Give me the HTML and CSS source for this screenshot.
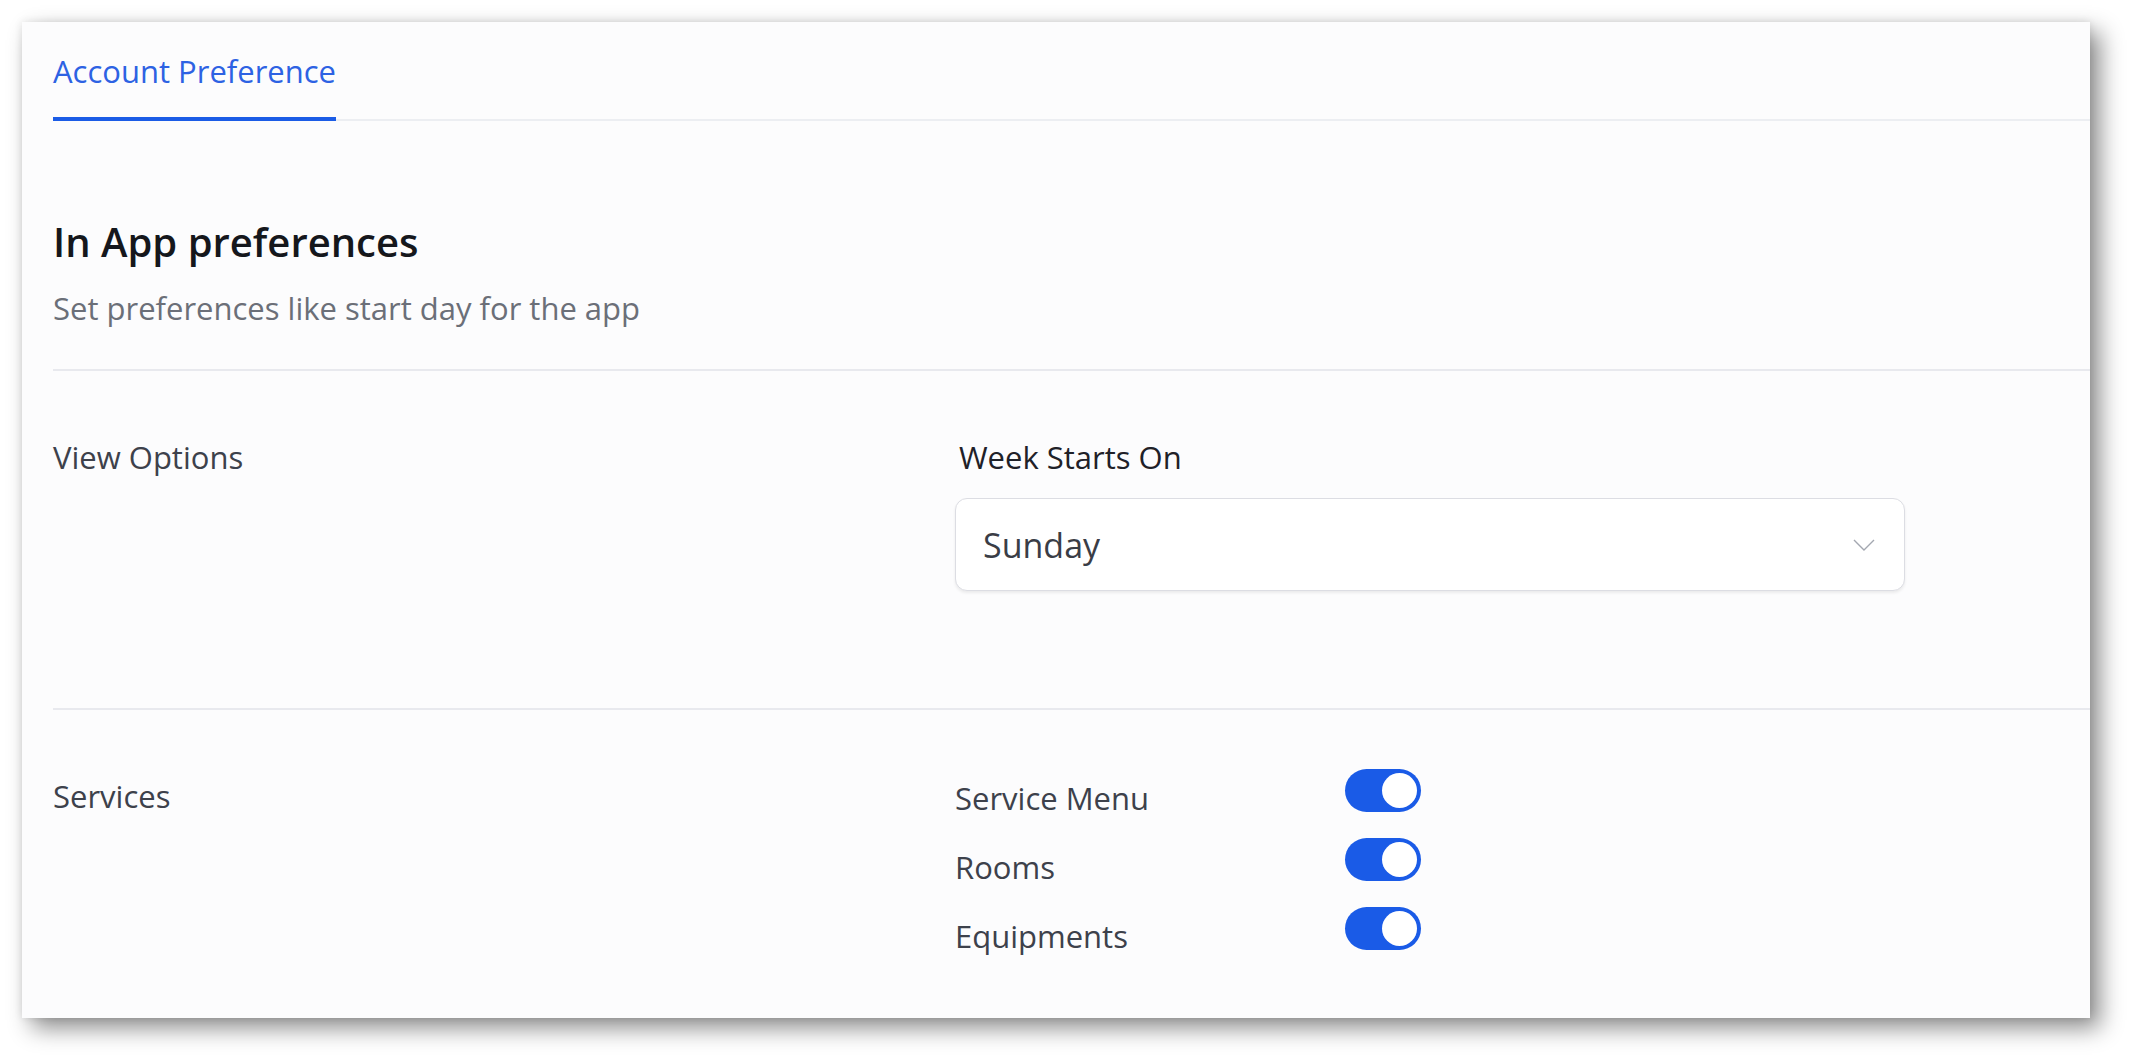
FILE: index.html
```html
<!DOCTYPE html>
<html lang="en">
<head>
  <meta charset="UTF-8">
  <meta name="viewport" content="width=device-width, initial-scale=1.0">
  <title>Account Preference</title>
  <link rel="stylesheet" href="styles.css">
</head>
<body>
  <div class="card">
    <!-- Tabs -->
    <div class="tabs">
      <div class="tab active">Account Preference</div>
    </div>

    <!-- Section title -->
    <div class="section-head">
      <h1>In App preferences</h1>
      <p>Set preferences like start day for the app</p>
    </div>

    <!-- View options -->
    <div class="pref-row">
      <div class="pref-label">View Options</div>
      <div class="pref-body">
        <div class="field-label">Week Starts On</div>
        <div class="select">
          <span>Sunday</span>
          <svg width="22" height="12" viewBox="0 0 22 12">
            <polyline points="1,1 11,11 21,1" fill="none" stroke="#a3a7b0" stroke-width="1.4"/>
          </svg>
        </div>
      </div>
    </div>

    <!-- Services -->
    <div class="pref-row services">
      <div class="pref-label">Services</div>
      <div class="pref-body toggles">
        <div class="toggle-row">
          <span>Service Menu</span>
          <span class="switch on"></span>
        </div>
        <div class="toggle-row">
          <span>Rooms</span>
          <span class="switch on"></span>
        </div>
        <div class="toggle-row">
          <span>Equipments</span>
          <span class="switch on"></span>
        </div>
      </div>
    </div>
  </div>
</body>
</html>
```

FILE: styles.css
```css
/* General */
body {
  margin: 0;
  padding: 22px 42px 43px 22px;
  font-family: 'Open Sans', 'Noto Sans', sans-serif;
  background: #fff;
}

/* Card */
.card {
  background: #fcfcfd;
  padding-left: 31px;
  box-shadow: 10px 10px 22px rgba(0, 0, 0, 0.45), 0 0 8px rgba(0, 0, 0, 0.1);
}

/* Tabs */
.tabs {
  display: flex;
  border-bottom: 2px solid #eceef2;
}

.tab {
  font-size: 31px;
  line-height: 40px;
  padding: 29px 0 26px;
  color: #2d62e3;
  border-bottom: 4px solid #1b5ce6;
  margin-bottom: -2px;
}

/* Section header */
.section-head {
  padding: 95px 0 41px;
}

.section-head h1 {
  margin: 0;
  font-size: 40px;
  line-height: 52px;
  font-weight: 600;
  color: #15171c;
}

.section-head p {
  margin: 20px 0 0;
  font-size: 31px;
  line-height: 40px;
  color: #6b6f78;
}

/* Preference rows */
.pref-row {
  display: grid;
  grid-template-columns: 902px 1fr;
  border-top: 2px solid #e8e9ee;
  padding: 66px 0 117px;
}

.pref-row.services {
  padding-bottom: 61px;
}

.pref-label {
  font-size: 31px;
  line-height: 40px;
  color: #3d414b;
}

.field-label {
  font-size: 31px;
  line-height: 40px;
  color: #1f2128;
  padding-left: 4px;
}

/* Select */
.select {
  width: 950px;
  height: 93px;
  box-sizing: border-box;
  margin-top: 21px;
  padding: 0 29px 0 27px;
  display: flex;
  align-items: center;
  justify-content: space-between;
  background: #fff;
  border: 1.5px solid #dcdde3;
  border-radius: 12px;
  box-shadow: 0 2px 3px rgba(0, 0, 0, 0.07);
  font-size: 34px;
  color: #3a3d46;
}

/* Toggles */
.toggles {
  display: flex;
  flex-direction: column;
  gap: 26px;
}

.toggle-row {
  display: grid;
  grid-template-columns: 390px 76px;
  align-items: center;
  height: 43px;
  font-size: 31px;
  line-height: 40px;
  color: #3d414b;
}

.switch {
  align-self: start;
  width: 76px;
  height: 43px;
  margin-top: -7px;
  border-radius: 22px;
  background: #c9ccd3;
  position: relative;
}

.switch::after {
  content: '';
  position: absolute;
  top: 4px;
  left: 4px;
  width: 35px;
  height: 35px;
  border-radius: 50%;
  background: #fff;
}

.switch.on {
  background: #1a5be7;
}

.switch.on::after {
  left: 37px;
}
```
